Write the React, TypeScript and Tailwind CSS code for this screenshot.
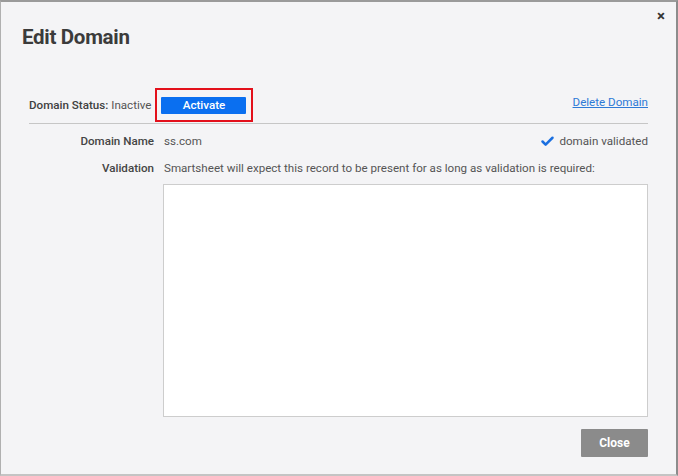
import { Check } from 'lucide-react';

export default function App() {
  return (
    <div
      className="w-[678px] h-[476px] bg-[#f4f4f6] border-t-2 border-l border-r-2 border-b-2 border-t-[#9a9a9a] border-l-[#b0b0b0] border-r-[#8c8c8c] border-b-[#c4c4c4] relative flex flex-col"
      style={{ fontFamily: 'Roboto, "Liberation Sans", sans-serif' }}
    >
      {/* Close X */}
      <button className="absolute top-[7px] right-[11px] text-[15px] font-bold leading-none text-[#333]">×</button>

      {/* Title */}
      <h1 className="ml-[21px] mt-[21px] h-[28px] leading-[28px] text-[20.5px] font-bold text-[#3b3b3b] tracking-[-0.3px]">
        Edit Domain
      </h1>

      {/* Status row */}
      <div className="ml-[28px] mr-[28px] mt-[37px] flex items-center justify-between">
        <div className="flex items-center text-[11.6px]">
          <span className="font-medium text-[#404040]">Domain Status:</span>
          <span className="ml-[3px] text-[#555]">Inactive</span>
          <div className="ml-[4px] border-2 border-[#e3101b] pl-[4px] pr-[5px] pt-[7px] pb-[6px]">
            <button className="w-[85px] h-[17px] bg-[#0a6ff0] text-white text-[11.6px] font-medium rounded-[1px] leading-none">
              Activate
            </button>
          </div>
        </div>
        <a href="#" className="text-[11.6px] text-[#2e7ad6] underline -mt-[6px]">Delete Domain</a>
      </div>

      <div className="mx-[28px] mt-[1px] h-px bg-[#c6c6c6]" />

      {/* Domain name */}
      <div className="mx-[28px] mt-[8px] h-[18px] flex items-center text-[11.6px]">
        <span className="w-[125px] text-right font-medium text-[#444]">Domain Name</span>
        <span className="ml-[10px] text-[#555]">ss.com</span>
        <span className="ml-auto flex items-center text-[#555]">
          <Check className="w-[15px] h-[15px] text-[#1a6fe0] mr-[4px]" strokeWidth={4} />
          domain validated
        </span>
      </div>

      {/* Validation */}
      <div className="mx-[28px] mt-[9px] h-[18px] flex items-center text-[11.6px]">
        <span className="w-[125px] text-right font-medium text-[#444]">Validation</span>
        <span className="ml-[10px] text-[#555]">
          Smartsheet will expect this record to be present for as long as validation is required:
        </span>
      </div>

      <div className="ml-[162px] mr-[28px] mt-[7px] h-[233px] bg-white border border-[#cdcdcd]" />

      <div className="mr-[28px] mt-[12px] flex justify-end">
        <button className="w-[67px] h-[28px] bg-[#8b8b8b] text-white text-[12px] font-bold rounded-[1px]">Close</button>
      </div>
    </div>
  );
}
